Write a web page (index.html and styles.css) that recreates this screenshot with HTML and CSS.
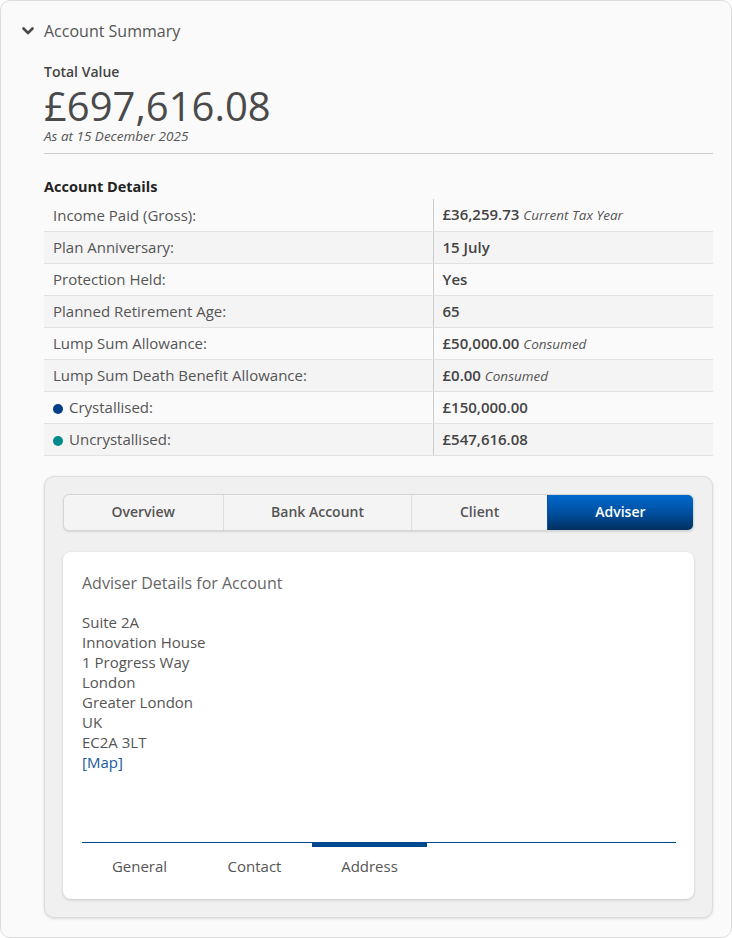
FILE: index.html
```html
<!DOCTYPE html>
<html lang="en">
<head>
<meta charset="utf-8">
<title>Account Summary</title>
<link rel="stylesheet" href="styles.css">
</head>
<body>
<section class="panel">
  <header class="panel-head">
    <svg class="chevron" width="12" height="8" viewBox="0 0 12 8" aria-hidden="true">
      <polyline points="1.5,1.5 6,6 10.5,1.5" fill="none" stroke="#4a4a4a" stroke-width="2.6" stroke-linecap="round" stroke-linejoin="round"/>
    </svg>
    <h1 class="panel-title">Account Summary</h1>
  </header>

  <div class="panel-body">
    <div class="total">
      <div class="total-label">Total Value</div>
      <div class="total-value">£697,616.08</div>
      <div class="total-date">As at 15 December 2025</div>
    </div>

    <h2 class="section-title">Account Details</h2>
    <table class="details">
      <tbody>
        <tr><td class="k">Income Paid (Gross):</td><td class="v">£36,259.73 <em>Current Tax Year</em></td></tr>
        <tr><td class="k">Plan Anniversary:</td><td class="v">15 July</td></tr>
        <tr><td class="k">Protection Held:</td><td class="v">Yes</td></tr>
        <tr><td class="k">Planned Retirement Age:</td><td class="v">65</td></tr>
        <tr><td class="k">Lump Sum Allowance:</td><td class="v">£50,000.00 <em>Consumed</em></td></tr>
        <tr><td class="k">Lump Sum Death Benefit Allowance:</td><td class="v">£0.00 <em>Consumed</em></td></tr>
        <tr><td class="k"><span class="dot dot-crys"></span>Crystallised:</td><td class="v">£150,000.00</td></tr>
        <tr><td class="k"><span class="dot dot-uncrys"></span>Uncrystallised:</td><td class="v">£547,616.08</td></tr>
      </tbody>
    </table>

    <div class="well">
      <nav class="seg-tabs">
        <a class="seg">Overview</a>
        <a class="seg">Bank Account</a>
        <a class="seg">Client</a>
        <a class="seg seg-active">Adviser</a>
      </nav>

      <div class="card">
        <h3 class="card-title">Adviser Details for Account</h3>
        <address class="addr">
          Suite 2A<br>
          Innovation House<br>
          1 Progress Way<br>
          London<br>
          Greater London<br>
          UK<br>
          EC2A 3LT<br>
          <a class="map-link">[Map]</a>
        </address>
        <ul class="sub-tabs">
          <li class="sub">General</li>
          <li class="sub">Contact</li>
          <li class="sub sub-active">Address</li>
        </ul>
      </div>
    </div>
  </div>
</section>
</body>
</html>
```

FILE: styles.css
```css
* {
  box-sizing: border-box;
}

html, body {
  margin: 0;
  padding: 0;
  background: #ffffff;
}

body {
  font-family: "Open Sans", "Noto Sans", sans-serif;
  color: #555555;
  font-size: 15px;
  line-height: 20px;
}

/* outer summary panel */
.panel {
  width: 732px;
  height: 938px;
  background: #fafafa;
  border: 1px solid #dddddd;
  border-radius: 10px;
}

.panel-head {
  display: flex;
  align-items: center;
  padding: 18px 0 0 21px;
}

.chevron {
  display: block;
  margin-right: 10px;
}

.panel-title {
  margin: 0;
  font-size: 16px;
  line-height: 24px;
  font-weight: 400;
  color: #555555;
}

.panel-body {
  padding: 19px 18px 0 43px;
}

/* total value block */
.total {
  border-bottom: 1px solid #cccccc;
  padding-bottom: 9px;
}

.total-label {
  font-size: 14px;
  font-weight: 600;
  color: #444444;
}

.total-value {
  font-size: 40px;
  line-height: 44px;
  margin-top: 2px;
  color: #4a4a4a;
}

.total-date {
  font-size: 13.5px;
  line-height: 16px;
  font-style: italic;
  color: #555555;
}

.section-title {
  margin: 23px 0 2px;
  font-size: 14.5px;
  line-height: 20px;
  font-weight: 700;
  color: #222222;
}

/* key / value table */
.details {
  width: 100%;
  border-collapse: collapse;
}

.details td {
  height: 32px;
  padding: 0 9px;
  border-bottom: 1px solid #e2e2e2;
  vertical-align: middle;
}

.details tr:nth-child(even) td {
  background: #f4f4f4;
}

.details .k {
  width: 389px;
  color: #555555;
}

.details .v {
  border-left: 1px solid #cccccc;
  font-weight: 600;
  color: #444444;
}

.details em {
  font-weight: 400;
  font-size: 13.5px;
  color: #555555;
}

.dot {
  display: inline-block;
  width: 10px;
  height: 10px;
  border-radius: 50%;
  margin: 0 6px 0 0;
  vertical-align: -1px;
}

.dot-crys {
  background: #003f87;
}

.dot-uncrys {
  background: #008a8c;
}

/* grey well with tabs */
.well {
  margin-top: 20px;
  background: #f0f0f0;
  border: 1px solid #dcdcdc;
  border-radius: 10px;
  box-shadow: 0 1px 3px rgba(0, 0, 0, 0.12);
  padding: 17px 18px 18px 18px;
}

.seg-tabs {
  display: flex;
  border: 1px solid #d6d6d6;
  border-radius: 6px;
  overflow: hidden;
  background: #f4f4f4;
  box-shadow: 0 1px 2px rgba(0, 0, 0, 0.12);
}

.seg {
  flex: 1 1 auto;
  text-align: center;
  padding: 7px 0 8px;
  font-size: 14px;
  font-weight: 600;
  color: #555555;
  border-left: 1px solid #dedede;
}

.seg:first-child {
  border-left: none;
}

.seg-active {
  color: #ffffff;
  border-left-color: #0a4f9a;
  background: linear-gradient(to bottom, #0068cc 0%, #0050a2 50%, #00305f 100%);
}

/* white details card */
.card {
  margin-top: 21px;
  background: #ffffff;
  border-radius: 8px;
  box-shadow: 0 1px 3px rgba(0, 0, 0, 0.18);
  padding: 19px 18px 23px 19px;
  height: 347px;
}

.card-title {
  margin: 0;
  font-size: 16px;
  line-height: 24px;
  font-weight: 400;
  color: #666666;
}

.addr {
  margin-top: 17px;
  font-style: normal;
  color: #555555;
}

.map-link {
  color: #1a5a9e;
}

.sub-tabs {
  list-style: none;
  margin: 70px 0 0;
  padding: 0;
  display: flex;
  border-top: 1px solid #004990;
}

.sub {
  width: 115px;
  margin-top: -1px;
  border-top: 5px solid transparent;
  padding-top: 9px;
  text-align: center;
  color: #555555;
}

.sub-active {
  border-top-color: #004990;
}
```
